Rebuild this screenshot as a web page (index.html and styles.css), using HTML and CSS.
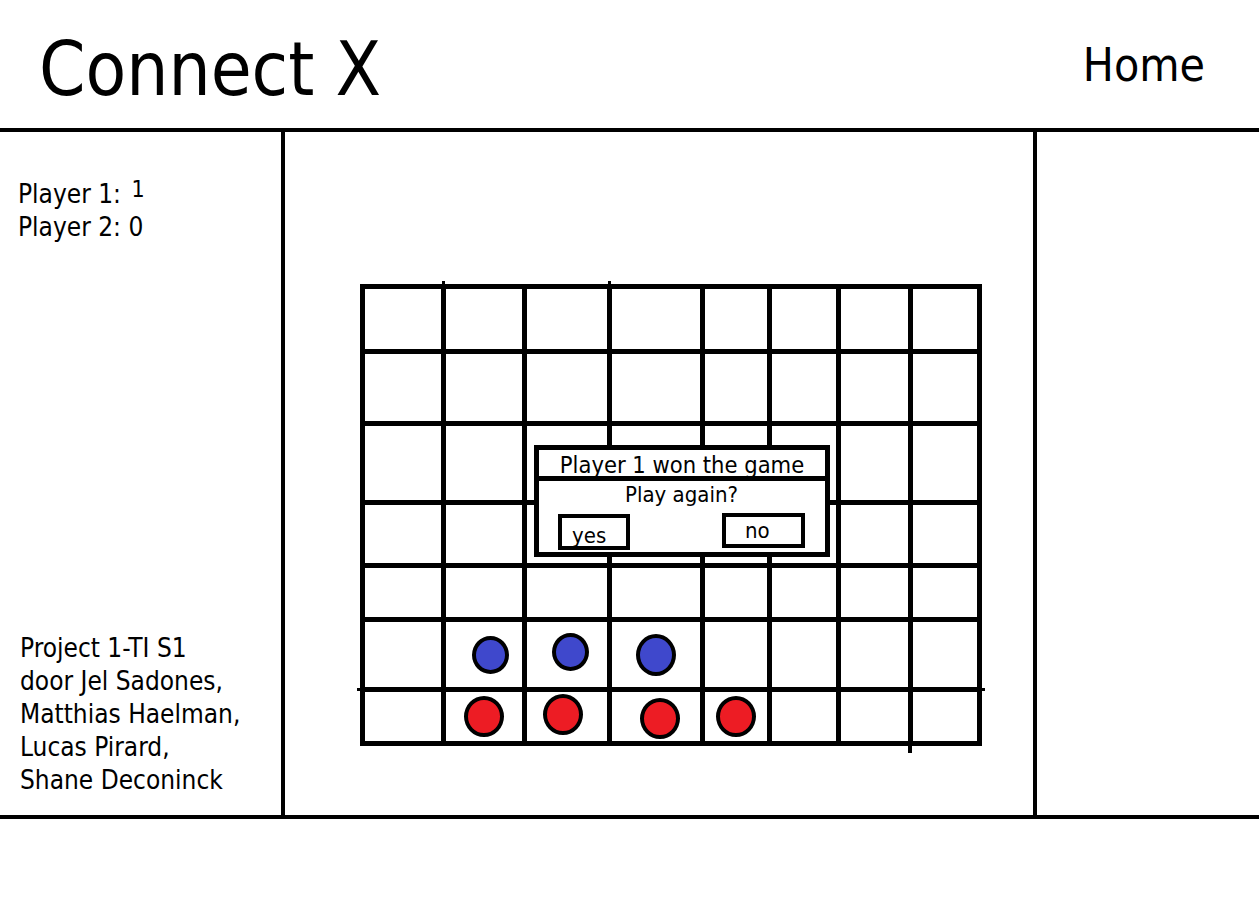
FILE: index.html
```html
<!DOCTYPE html>
<html lang="nl">
<head>
  <meta charset="UTF-8" />
  <title>Connect X</title>
  <link rel="stylesheet" href="styles.css">
</head>
<body>
  <header class="topbar">
    <h1 class="title">Connect X</h1>
    <a class="home-link" href="#">Home</a>
  </header>

  <main class="layout">
    <!-- scores + credits -->
    <aside class="side">
      <div class="scores">
        <div>Player 1: <span class="score-up">1</span></div>
        <div>Player 2: 0</div>
      </div>
      <div class="credits">
        Project 1-TI S1<br>
        door Jel Sadones,<br>
        Matthias Haelman,<br>
        Lucas Pirard,<br>
        Shane Deconinck
      </div>
    </aside>

    <!-- speelbord -->
    <section class="stage">
      <div class="board">
        <div class="cell"></div><div class="cell"></div><div class="cell"></div><div class="cell"></div><div class="cell"></div><div class="cell"></div><div class="cell"></div><div class="cell"></div>
        <div class="cell"></div><div class="cell"></div><div class="cell"></div><div class="cell"></div><div class="cell"></div><div class="cell"></div><div class="cell"></div><div class="cell"></div>
        <div class="cell"></div><div class="cell"></div><div class="cell"></div><div class="cell"></div><div class="cell"></div><div class="cell"></div><div class="cell"></div><div class="cell"></div>
        <div class="cell"></div><div class="cell"></div><div class="cell"></div><div class="cell"></div><div class="cell"></div><div class="cell"></div><div class="cell"></div><div class="cell"></div>
        <div class="cell"></div><div class="cell"></div><div class="cell"></div><div class="cell"></div><div class="cell"></div><div class="cell"></div><div class="cell"></div><div class="cell"></div>
        <div class="cell"></div>
        <div class="cell"><span class="chip blue b1"></span></div>
        <div class="cell"><span class="chip blue b2"></span></div>
        <div class="cell"><span class="chip blue b3"></span></div>
        <div class="cell"></div><div class="cell"></div><div class="cell"></div><div class="cell"></div>
        <div class="cell"></div>
        <div class="cell"><span class="chip red r1"></span></div>
        <div class="cell"><span class="chip red r2"></span></div>
        <div class="cell"><span class="chip red r3"></span></div>
        <div class="cell"><span class="chip red r4"></span></div>
        <div class="cell"></div><div class="cell"></div><div class="cell"></div>

        <!-- losse pennenstreken -->
        <span class="tick tick-top1"></span>
        <span class="tick tick-top2"></span>
        <span class="tick tick-bottom"></span>
        <span class="tick tick-row"></span>

        <!-- popup einde spel -->
        <div class="dialog">
          <div class="dialog-title">Player 1 won the game</div>
          <div class="dialog-body">
            <div class="dialog-question">Play again?</div>
            <div class="dialog-actions">
              <button class="btn btn-yes">yes</button>
              <button class="btn btn-no">no</button>
            </div>
          </div>
        </div>
      </div>
    </section>

    <aside class="side-right"></aside>
  </main>
</body>
</html>
```

FILE: styles.css
```css
body {
  margin: 0;
  font-family: "DejaVu Sans Condensed", "DejaVu Sans", sans-serif;
  font-stretch: condensed;
  color: #000;
  background: #fff;
}

.topbar {
  height: 128px;
  display: flex;
  justify-content: space-between;
  align-items: flex-start;
  box-sizing: border-box;
  padding: 0 54px 0 39px;
}

.title {
  margin: 0;
  font-size: 74px;
  font-weight: normal;
  line-height: 1;
  padding-top: 32px;
}

.home-link {
  color: #000;
  text-decoration: none;
  font-size: 46px;
  line-height: 1;
  padding-top: 42px;
}

.layout {
  display: grid;
  grid-template-columns: 281px 1fr 222px;
  height: 691px;
  border-top: 4px solid #000;
  border-bottom: 4px solid #000;
  box-sizing: border-box;
}

.side {
  display: flex;
  flex-direction: column;
  justify-content: space-between;
  padding: 41px 0 18px 18px;
  font-size: 26px;
  line-height: 33px;
}

.score-up {
  font-size: 23px;
  vertical-align: 6px;
  margin-left: 3px;
}

.credits {
  padding-left: 2px;
}

.stage {
  border-left: 4px solid #000;
  border-right: 4px solid #000;
  padding: 152px 0 0 75px;
}

.board {
  position: relative;
  display: grid;
  grid-template-columns: 76px 76px 80px 88px 62px 64px 67px 64px;
  grid-template-rows: 60px 67px 74px 58px 49px 65px 49px;
  gap: 5px;
  padding: 5px;
  width: max-content;
  background: #000;
}

.cell {
  background: #fff;
  display: flex;
  align-items: center;
  justify-content: center;
}

.chip {
  box-sizing: border-box;
  border: 4px solid #000;
  border-radius: 50%;
}

.chip.blue {
  width: 37px;
  height: 38px;
  background: #3f48cc;
}

.chip.red {
  width: 40px;
  height: 41px;
  background: #ed1c24;
}

.b1 { margin-left: 12px; }
.b2 { margin-left: 6px; margin-top: -6px; }
.b3 { width: 40px !important; height: 42px !important; }
.r2 { margin-left: -8px; margin-top: -5px; }
.r3 { margin-left: 8px; margin-top: 3px; }

.tick {
  position: absolute;
  background: #000;
}

.tick-top1 {
  left: 82px;
  top: -3px;
  width: 3px;
  height: 4px;
}

.tick-top2 {
  left: 248px;
  top: -3px;
  width: 3px;
  height: 4px;
}

.tick-bottom {
  left: 548px;
  top: 460px;
  width: 4px;
  height: 9px;
}

.tick-row {
  left: -3px;
  top: 404px;
  width: 628px;
  height: 3px;
}

.dialog {
  position: absolute;
  left: 174px;
  top: 161px;
  width: 296px;
  height: 112px;
  box-sizing: border-box;
  border: 5px solid #000;
  background: #fff;
  display: flex;
  flex-direction: column;
}

.dialog-title {
  height: 26px;
  border-bottom: 5px solid #000;
  text-align: center;
  font-size: 23.5px;
  line-height: 30px;
  overflow: hidden;
}

.dialog-body {
  flex: 1;
  padding: 0 20px 2px 19px;
  display: flex;
  flex-direction: column;
}

.dialog-question {
  text-align: center;
  font-size: 22px;
  line-height: 28px;
  height: 32px;
}

.dialog-actions {
  display: flex;
  justify-content: space-between;
  align-items: flex-end;
  flex: 1;
}

.btn {
  box-sizing: border-box;
  border: 4px solid #000;
  background: #fff;
  font-family: inherit;
  font-stretch: condensed;
  font-size: 22px;
  color: #000;
  padding: 0;
}

.btn-yes {
  width: 72px;
  height: 36px;
  line-height: 36px;
  text-align: left;
  padding-left: 10px;
}

.btn-no {
  width: 83px;
  height: 35px;
  line-height: 26px;
  margin-bottom: 2px;
  text-align: left;
  padding-left: 19px;
}
```
